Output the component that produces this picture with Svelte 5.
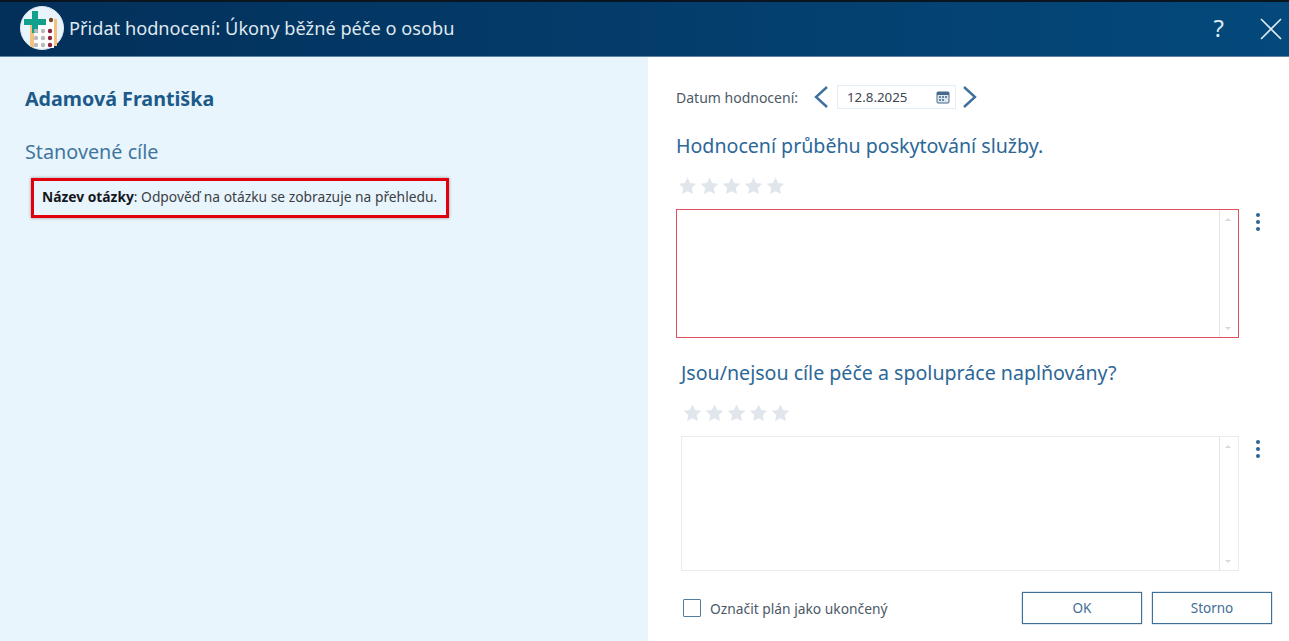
<script lang="ts">
  const stars = [0, 1, 2, 3, 4];
  const questions = [
    { title: 'Hodnocení průběhu poskytování služby.', invalid: true },
    { title: 'Jsou/nejsou cíle péče a spolupráce naplňovány?', invalid: false }
  ];
</script>

<div class="dialog">
  <header class="titlebar">
    <div class="logo">
      <svg width="44" height="44" viewBox="0 0 44 44">
        <circle cx="22" cy="22" r="21.500" fill="#e8f4fb" stroke="#dfe8ee" />
        <rect x="10" y="15" width="4" height="26" fill="#f3c27e" />
        <rect x="34" y="13" width="3" height="27" fill="#f3c27e" />
        <rect x="14" y="13" width="20" height="29" fill="#fff" />
        <rect x="12" y="5" width="6" height="22" fill="#12a08e" />
        <rect x="4" y="13" width="22" height="6" fill="#12a08e" />
        {#each [25, 32, 39] as y}
          {#each [16, 23, 30] as x, col}
            <circle cx={x} cy={y} r="2.200" fill={col === 2 ? '#8c2440' : '#b9b9b9'} />
          {/each}
        {/each}
        <circle cx="31" cy="14" r="2.200" fill="#7a4a2c" />
      </svg>
    </div>
    <h1>Přidat hodnocení: Úkony běžné péče o osobu</h1>
    <button class="help" type="button">?</button>
    <button class="close" type="button" aria-label="Zavřít">
      <svg width="22" height="22" viewBox="0 0 22 22">
        <path d="M1 1l20 20M21 1L1 21" stroke="#dfe9f1" stroke-width="1.600" fill="none" />
      </svg>
    </button>
  </header>

  <div class="body">
    <aside class="left">
      <h2>Adamová Františka</h2>
      <h3>Stanovené cíle</h3>
      <p class="note"><b>Název otázky</b>: Odpověď na otázku se zobrazuje na přehledu.</p>
    </aside>

    <main class="right">
      <div class="date-row">
        <span class="date-label">Datum hodnocení:</span>
        <svg class="arrow" width="16" height="24" viewBox="0 0 16 24">
          <path d="M14 2L3 12l11 10" stroke="#3f6f9c" stroke-width="2.400" fill="none" />
        </svg>
        <div class="date-input">
          <span>12.8.2025</span>
          <svg width="14" height="14" viewBox="0 0 14 14">
            <rect x="1" y="2" width="12" height="11" rx="1" fill="#dbe6ef" stroke="#46698c" />
            <rect x="1" y="2" width="12" height="3" fill="#46698c" />
            <path d="M3 7h2M6 7h2M9 7h2M3 10h2M6 10h2" stroke="#46698c" stroke-width="1.300" />
          </svg>
        </div>
        <svg class="arrow" width="16" height="24" viewBox="0 0 16 24">
          <path d="M2 2l11 10L2 22" stroke="#3f6f9c" stroke-width="2.400" fill="none" />
        </svg>
      </div>

      {#each questions as q, i}
        <section class="question" class:second={i === 1}>
          <h4>{q.title}</h4>
          <div class="stars">
            {#each stars as s}
              <svg width="22" height="20" viewBox="0 0 23 21">
                <path d="M11 1.500l2.800 5.900 6.400.8-4.700 4.400 1.200 6.400-5.700-3.100-5.700 3.100 1.200-6.400L1.800 8.200l6.400-.8z" fill="#e0e6ec" />
              </svg>
            {/each}
          </div>
          <div class="field-row">
            <div class="field" class:invalid={q.invalid}>
              <div class="scroll">
                <span class="up"></span>
                <span class="down"></span>
              </div>
            </div>
            <div class="dots"><i></i><i></i><i></i></div>
          </div>
        </section>
      {/each}

      <footer class="actions">
        <label class="check"><span class="box"></span>Označit plán jako ukončený</label>
        <div class="buttons">
          <button type="button">OK</button>
          <button type="button">Storno</button>
        </div>
      </footer>
    </main>
  </div>
</div>

<style>
  :global(body) {
    margin: 0;
    background: #fff;
  }

  .dialog {
    width: 1289px;
    height: 641px;
    display: flex;
    flex-direction: column;
    overflow: hidden;
    font-family: "Noto Sans", "Open Sans", sans-serif;
  }

  .titlebar {
    height: 54px;
    flex: none;
    display: flex;
    align-items: center;
    padding: 0 7px 0 20px;
    border-top: 2px solid #0b1520;
    border-bottom: 1px solid #5d84a5;
    background: linear-gradient(90deg, #03305a 0%, #04497c 100%);
  }

  .logo {
    width: 44px;
    height: 44px;
    display: flex;
    margin-bottom: 2px;
  }

  h1 {
    flex: 1;
    margin: 0 0 2px 5px;
    font-size: 18.200px;
    font-weight: 400;
    color: #dfe8ef;
  }

  .help {
    border: 0;
    padding: 0 0 4px;
    margin-right: 36px;
    background: none;
    color: #dfe9f1;
    font: 400 24px "Noto Sans", sans-serif;
  }

  .close {
    border: 0;
    padding: 0;
    background: none;
    display: flex;
  }

  .body {
    flex: 1;
    display: flex;
    min-height: 0;
  }

  .left {
    width: 648px;
    flex: none;
    box-sizing: border-box;
    padding: 29px 25px;
    background: #e9f5fc;
  }

  h2 {
    margin: 0;
    font-size: 19.700px;
    line-height: 25px;
    font-weight: 700;
    color: #1c5a8a;
  }

  h3 {
    margin: 28px 0 0;
    font-size: 19.800px;
    line-height: 25px;
    font-weight: 400;
    color: #3f759f;
  }

  .note {
    width: 418px;
    height: 40px;
    box-sizing: border-box;
    margin: 14px 0 0 6px;
    padding: 0 0 3px 8px;
    display: flex;
    align-items: center;
    white-space: pre;
    border: 3px solid #e2000f;
    box-shadow: 0 0 3px rgba(0, 0, 0, 0.4);
    font-size: 13.800px;
    color: #3b4046;
  }

  .note b {
    color: #14181d;
  }

  .right {
    flex: 1;
    padding: 27px 17px 0 28px;
    min-width: 0;
  }

  .date-row {
    height: 26px;
    display: flex;
    align-items: center;
    color: #44505c;
  }

  .date-label {
    width: 137px;
    font-size: 14px;
    color: #4c5966;
  }

  .date-input {
    width: 119px;
    height: 24px;
    box-sizing: border-box;
    margin: 0 6px 0 8px;
    padding: 0 5px 0 9px;
    display: flex;
    align-items: center;
    justify-content: space-between;
    border: 1px solid #e3edf5;
    font-size: 13.300px;
    color: #3c4650;
  }

  .question {
    margin-top: 21px;
  }

  .question.second {
    margin: 20px 0 0 5px;
  }

  h4 {
    margin: 0;
    font-size: 19.600px;
    line-height: 30px;
    font-weight: 400;
    color: #2c6797;
  }

  .stars {
    height: 20px;
    display: flex;
    margin: 15px 0 0 1px;
  }

  .field-row {
    display: flex;
    margin-top: 13px;
  }

  .field {
    width: 563px;
    height: 129px;
    box-sizing: border-box;
    display: flex;
    justify-content: flex-end;
    border: 1px solid #e5edf3;
  }

  .second .field {
    width: 558px;
    height: 135px;
  }

  .field.invalid {
    border-color: #e04f5c;
  }

  .scroll {
    width: 18px;
    position: relative;
    border-left: 1px solid #e1e4e7;
  }

  .up,
  .down {
    position: absolute;
    left: 5px;
    width: 0;
    height: 0;
    border-left: 3px solid transparent;
    border-right: 3px solid transparent;
  }

  .up {
    top: 8px;
    border-bottom: 3px solid #d5d9dc;
  }

  .down {
    bottom: 7px;
    border-top: 3px solid #d5d9dc;
  }

  .dots {
    display: flex;
    flex-direction: column;
    gap: 3px;
    margin: 4px 0 0 17px;
  }

  .dots i {
    width: 4px;
    height: 4px;
    border-radius: 50%;
    background: #2a6595;
  }

  .actions {
    display: flex;
    align-items: center;
    justify-content: space-between;
    margin-top: 21px;
  }

  .check {
    display: flex;
    align-items: center;
    margin-left: 7px;
    font-size: 13.800px;
    color: #4c5966;
  }

  .box {
    width: 18px;
    height: 18px;
    box-sizing: border-box;
    margin-right: 9px;
    border: 1.500px solid #4f7da3;
    border-radius: 1px;
  }

  .buttons {
    display: flex;
    gap: 10px;
  }

  .buttons button {
    width: 120px;
    height: 32px;
    box-sizing: border-box;
    background: #fff;
    border: 1px solid #3c7099;
    box-shadow: 0 0 1px #3c7099;
    color: #3f6e95;
    font: 400 13.500px "Noto Sans", sans-serif;
  }
</style>
